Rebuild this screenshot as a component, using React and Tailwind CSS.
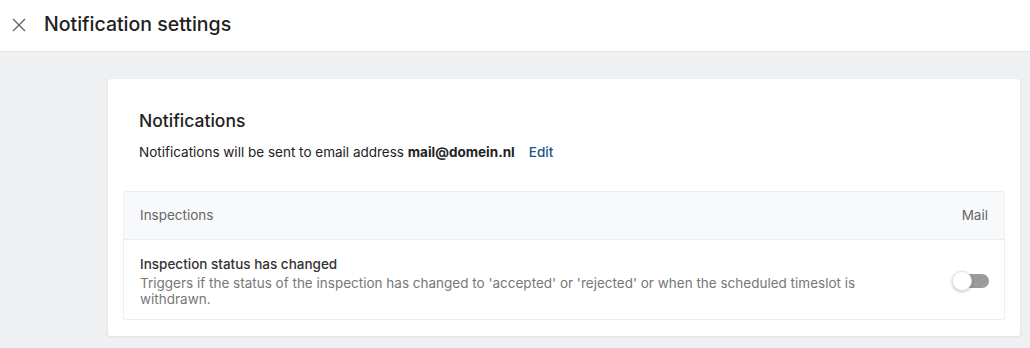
export default function App() {
  return (
    <div className="flex min-h-[348px] flex-col bg-[#eef0f2] font-['Inter',sans-serif] text-[#222]">
      <header className="flex h-[52px] items-center gap-[18px] border-b border-[#e3e5e8] bg-white px-[12px] pb-[2px]">
        <svg width="14" height="14" viewBox="0 0 14 14" className="text-[#666]">
          <path d="M1 1 L13 13 M13 1 L1 13" stroke="currentColor" strokeWidth="1.4" fill="none" />
        </svg>
        <h1 className="text-[19.5px] font-medium text-[#222]">Notification settings</h1>
      </header>

      <main className="flex-1 pl-[108px] pr-[10px] pt-[27px]">
        <section className="rounded-[3px] bg-white px-[15px] pb-[16px] pt-[31px] shadow-[0_1px_3px_rgba(0,0,0,0.08)]">
          <div className="px-[16px]">
            <h2 className="text-[17.5px] font-medium leading-[22px] text-[#222]">Notifications</h2>
            <p className="mt-[11px] text-[13.5px] leading-[18px] text-[#222]">
              Notifications will be sent to email address <strong className="font-bold">mail@domein.nl</strong>
              <button className="ml-[14px] font-medium text-[#17558c]">Edit</button>
            </p>
          </div>

          <div className="mt-[30px] rounded-[3px] border border-[#eceef0]">
            <div className="flex items-center justify-between border-b border-[#eceef0] bg-[#f8f9fa] px-[16px] py-[15px] text-[13.5px] leading-[17px] text-[#666]">
              <span>Inspections</span>
              <span>Mail</span>
            </div>
            <div className="flex items-center gap-[20px] px-[16px] pb-[12px] pt-[15px]">
              <div className="flex-1 pr-[60px]">
                <div className="text-[13.5px] font-medium leading-[19px] text-[#333]">Inspection status has changed</div>
                <div className="mt-[1px] text-[13.5px] leading-[16px] text-[#777]">
                  Triggers if the status of the inspection has changed to 'accepted' or 'rejected' or when the scheduled timeslot is withdrawn.
                </div>
              </div>
              <button className="relative mr-[-1px] h-[20px] w-[37px]">
                <span className="absolute right-0 top-[3px] h-[14px] w-[33px] rounded-full bg-[#9b9b9b]" />
                <span className="absolute left-0 top-0 h-[20px] w-[20px] rounded-full border border-[#e4e4e4] bg-white shadow-[0_1px_3px_rgba(0,0,0,0.25)]" />
              </button>
            </div>
          </div>
        </section>
      </main>
    </div>
  );
}
